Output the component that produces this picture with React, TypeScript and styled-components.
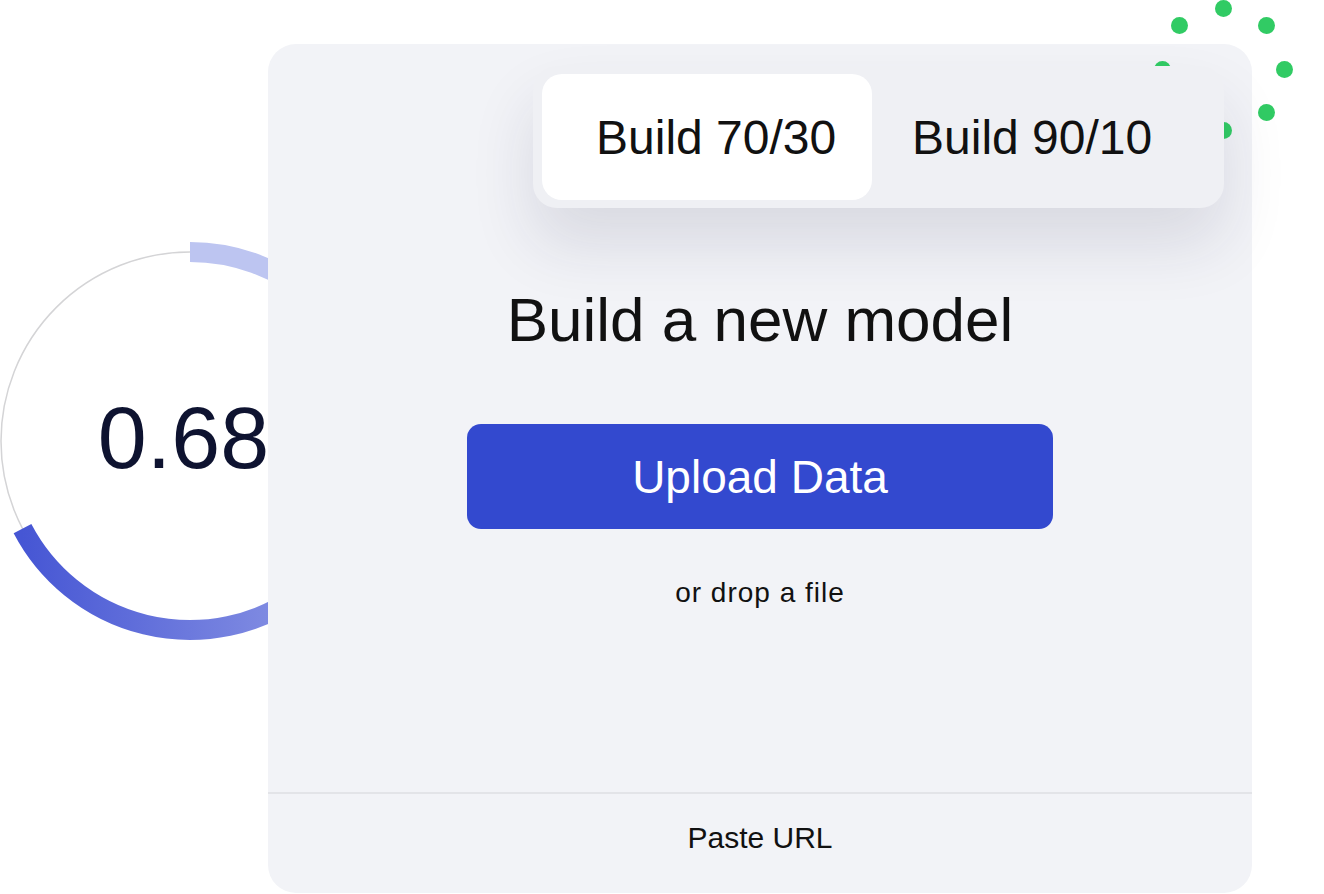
import React from "react";
import styled, { createGlobalStyle } from "styled-components";

const GlobalStyle = createGlobalStyle`
  html, body {
    margin: 0;
    padding: 0;
    background: #ffffff;
  }
  body {
    font-family: "Liberation Sans", Arial, sans-serif;
    color: #111111;
  }
`;

const DOT_CENTER = { x: 1223, y: 69 };
const DOT_RING = 61;
const DOT_SIZE = 17;

function App(): JSX.Element {
  const dots = Array.from({ length: 8 }, (_, i) => {
    const angle = (i * Math.PI) / 4;
    return {
      left: DOT_CENTER.x + DOT_RING * Math.cos(angle) - DOT_SIZE / 2,
      top: DOT_CENTER.y + DOT_RING * Math.sin(angle) - DOT_SIZE / 2,
    };
  });

  return (
    <>
      <GlobalStyle />
      <Stage>
        <Gauge>
          <svg width="400" height="400" viewBox="0 0 400 400">
            <defs>
              <linearGradient id="lowArc" x1="0" y1="0" x2="1" y2="0">
                <stop offset="0" stopColor="#4656d4" />
                <stop offset="1" stopColor="#8590e3" />
              </linearGradient>
            </defs>
            <circle cx="200" cy="200" r="189" fill="none" stroke="#d4d4d6" strokeWidth="1.5" />
            <path
              d="M 200 11 A 189 189 0 0 1 321.5 55.2"
              fill="none"
              stroke="#bdc5f1"
              strokeWidth="20"
            />
            <path
              d="M 32.5 287.6 A 189 189 0 0 0 308.4 354.8"
              fill="none"
              stroke="url(#lowArc)"
              strokeWidth="20"
            />
          </svg>
          <GaugeValue>0.68</GaugeValue>
        </Gauge>

        <Card>
          <CardBody>
            <TabRow>
              <TabBar>
                <Tab $active>Build 70/30</Tab>
                <Tab>Build 90/10</Tab>
              </TabBar>
            </TabRow>
            <Heading>Build a new model</Heading>
            <UploadButton>Upload Data</UploadButton>
            <DropHint>or drop a file</DropHint>
          </CardBody>
          <Footer>Paste URL</Footer>
        </Card>

        {dots.map((d, i) => (
          <Dot key={i} style={{ left: d.left, top: d.top }} />
        ))}
      </Stage>
    </>
  );
}

const Stage = styled.div`
  position: relative;
  width: 1324px;
  height: 894px;
  overflow: hidden;
  box-sizing: border-box;
  padding: 44px 0 0 268px;
  display: flex;
  align-items: flex-start;
`;

const Gauge = styled.div`
  position: absolute;
  left: -10px;
  top: 241px;
  width: 400px;
  height: 400px;
  display: flex;
  align-items: center;
  justify-content: center;

  svg {
    position: absolute;
    left: 0;
    top: 0;
  }
`;

const GaugeValue = styled.div`
  position: relative;
  font-size: 88px;
  line-height: 1;
  color: #0e1330;
  padding: 0 13px 7px 0;
`;

const Card = styled.div`
  position: relative;
  width: 984px;
  height: 849px;
  background: #f2f3f7;
  border-radius: 28px;
  display: flex;
  flex-direction: column;
`;

const CardBody = styled.div`
  flex: 1;
  display: flex;
  flex-direction: column;
  align-items: center;
  padding-top: 22px;
`;

const TabRow = styled.div`
  align-self: stretch;
  display: flex;
  justify-content: flex-end;
  padding-right: 28px;
`;

const TabBar = styled.div`
  position: relative;
  z-index: 2;
  display: flex;
  padding: 8px 8px 8px 9px;
  background: #eff0f4;
  border-radius: 24px;
  box-shadow: 0 36px 64px rgba(30, 35, 70, 0.12);
`;

const Tab = styled.div<{ $active?: boolean }>`
  box-sizing: border-box;
  height: 126px;
  width: ${(p) => (p.$active ? "330px" : "344px")};
  padding-left: ${(p) => (p.$active ? "54px" : "40px")};
  display: flex;
  align-items: center;
  font-size: 48px;
  color: #111111;
  border-radius: 20px;
  background: ${(p) => (p.$active ? "#ffffff" : "transparent")};
  white-space: nowrap;
`;

const Heading = styled.h1`
  margin: 81px 0 0;
  font-size: 62px;
  line-height: 1;
  font-weight: 400;
  color: #111111;
`;

const UploadButton = styled.button`
  margin-top: 73px;
  width: 586px;
  height: 105px;
  border: none;
  border-radius: 14px;
  background: #3349cf;
  color: #ffffff;
  font-family: inherit;
  font-size: 46px;
  line-height: 1;
  cursor: pointer;
`;

const DropHint = styled.div`
  margin-top: 50px;
  font-size: 28px;
  letter-spacing: 1px;
  line-height: 1;
  color: #111111;
`;

const Footer = styled.div`
  box-sizing: border-box;
  height: 101px;
  border-top: 2px solid #e3e4e8;
  display: flex;
  justify-content: center;
  padding-top: 29px;
  font-size: 30px;
  line-height: 1;
  color: #111111;
`;

const Dot = styled.span`
  position: absolute;
  z-index: 1;
  width: ${DOT_SIZE}px;
  height: ${DOT_SIZE}px;
  border-radius: 50%;
  background: #31cb64;
`;

export default App;
